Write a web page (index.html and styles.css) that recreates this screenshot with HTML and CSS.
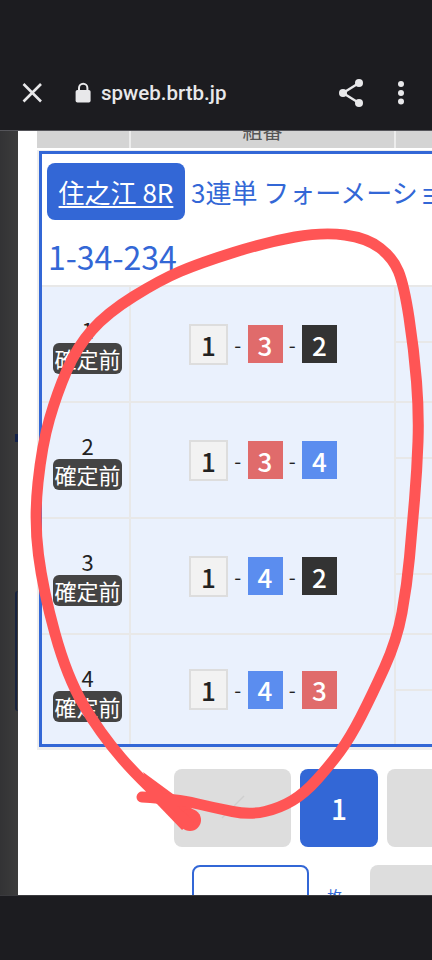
FILE: index.html
```html
<!DOCTYPE html>
<html lang="ja">
<head>
<meta charset="utf-8">
<title>spweb.brtb.jp</title>
<link rel="stylesheet" href="styles.css">
</head>
<body>
<div class="screen">
  <header class="topbar">
    <svg class="ico-close" width="24" height="24" viewBox="0 0 24 24"><path d="M3.5 3 L21 20.5 M21 3 L3.5 20.5" fill="none" stroke="#e8e8ea" stroke-width="2.6"/></svg>
    <svg class="ico-lock" width="20" height="24" viewBox="0 0 20 24"><path d="M6 10 V7 a4.2 4.2 0 0 1 8.4 0 V10" fill="none" stroke="#e8e8ea" stroke-width="2"/><rect x="2.6" y="9" width="15" height="12.5" rx="1.8" fill="#e8e8ea"/></svg>
    <span class="url">spweb.brtb.jp</span>
    <svg class="ico-share" width="28" height="30" viewBox="0 0 28 30"><path d="M22 5 L6 15 L22 25" fill="none" stroke="#e8e8ea" stroke-width="2.4"/><circle cx="22" cy="5" r="4" fill="#e8e8ea"/><circle cx="6" cy="15" r="4" fill="#e8e8ea"/><circle cx="22" cy="25" r="4" fill="#e8e8ea"/></svg>
    <svg class="ico-more" width="8" height="26" viewBox="0 0 8 26"><circle cx="4" cy="4" r="3" fill="#e8e8ea"/><circle cx="4" cy="13" r="3" fill="#e8e8ea"/><circle cx="4" cy="21.500" r="3" fill="#e8e8ea"/></svg>
  </header>

  <main class="content">
    <aside class="side">
      <div class="side-mark"></div>
      <div class="side-frame"></div>
    </aside>
    <section class="sheet">
      <div class="thead">
        <div class="th"></div>
        <div class="th th-label">組番</div>
        <div class="th"></div>
      </div>
      <div class="frame-wrap">
        <div class="frame">
          <div class="title">
            <div class="title-line">
              <a class="venue">住之江 8R</a>
              <span class="bet-type">3連単 フォーメーション</span>
            </div>
            <div class="combo">1-34-234</div>
          </div>

          <div class="row">
            <div class="cell-no"><span class="no">1</span><span class="status">確定前</span></div>
            <div class="cell-boxes">
              <span class="box box-1">1</span><span class="dash">-</span><span class="box box-3">3</span><span class="dash">-</span><span class="box box-2">2</span>
            </div>
            <div class="cell-rest"><div class="half"></div></div>
          </div>
          <div class="row">
            <div class="cell-no"><span class="no">2</span><span class="status">確定前</span></div>
            <div class="cell-boxes">
              <span class="box box-1">1</span><span class="dash">-</span><span class="box box-3">3</span><span class="dash">-</span><span class="box box-4">4</span>
            </div>
            <div class="cell-rest"><div class="half"></div></div>
          </div>
          <div class="row">
            <div class="cell-no"><span class="no">3</span><span class="status">確定前</span></div>
            <div class="cell-boxes">
              <span class="box box-1">1</span><span class="dash">-</span><span class="box box-4">4</span><span class="dash">-</span><span class="box box-2">2</span>
            </div>
            <div class="cell-rest"><div class="half"></div></div>
          </div>
          <div class="row row-last">
            <div class="cell-no"><span class="no">4</span><span class="status">確定前</span></div>
            <div class="cell-boxes">
              <span class="box box-1">1</span><span class="dash">-</span><span class="box box-4">4</span><span class="dash">-</span><span class="box box-3">3</span>
            </div>
            <div class="cell-rest"><div class="half"></div></div>
          </div>
        </div>
      </div>

      <div class="pager">
        <div class="pg pg-wide">
          <svg width="30" height="30" viewBox="0 0 30 30"><path d="M26 3 L4 25" stroke="#cfcfcf" stroke-width="1.5" fill="none"/></svg>
        </div>
        <div class="pg pg-on">1</div>
        <div class="pg pg-off"></div>
      </div>

      <div class="actions">
        <div class="act-outline"></div>
        <span class="act-unit">枚</span>
        <div class="act-gray">確定</div>
      </div>
    </section>
  </main>

  <footer class="bottombar"></footer>

  <svg class="scribble" width="432" height="960" viewBox="0 0 432 960">
    <polygon class="scribble-fill" points="143,772 177,797 200,815 182,830 156,803"/>
    <circle class="scribble-fill" cx="190" cy="820" r="11"/>
    <path class="scribble-line" d="M142 797 Q177 799 196 803.500 Q215 808 232.500 811.500 Q250 815 265 811.500 Q280 808 292.500 800.500 Q305 793 317.500 779 Q330 765 340 751.500 Q350 738 361 716.500 Q372 695 384.500 667.500 Q397 640 402 612.500 Q407 585 409.500 557.500 Q412 530 414.500 500 Q417 470 418 441.500 Q419 413 416.500 381.500 Q414 350 409 317.500 Q404 285 398.500 271.500 Q393 258 380 248 Q367 238 345 235 Q323 232 295 237 Q267 242 233.500 252.500 Q200 263 180 271.500 Q160 280 133.500 296.500 Q107 313 92 330 Q77 347 67 370 Q57 393 49.500 419 Q42 445 38 482.500 Q34 520 38.500 555 Q43 590 55 633.500 Q67 677 83.500 705 Q100 733 121.500 758 Q143 783 188 823"/>
  </svg>
</div>
</body>
</html>
```
FILE: styles.css
```css
* { box-sizing: border-box; }
html, body { margin: 0; padding: 0; }
body { background: #1c1c20; font-family: "Noto Sans CJK JP", "Noto Sans", sans-serif; }

.screen {
  position: relative;
  width: 432px;
  height: 960px;
  overflow: hidden;
  display: flex;
  flex-direction: column;
}

/* browser chrome */
.topbar {
  height: 131px;
  flex: none;
  background: #1c1c20;
  border-bottom: 1px solid #55555a;
  display: flex;
  align-items: center;
  padding: 56px 0 0 20px;
}
.ico-lock { margin-left: 29px; }
.url {
  margin-left: 8px;
  font-family: Roboto, sans-serif;
  font-weight: 500;
  font-size: 20.500px;
  color: #e8e8ea;
}
.ico-share { margin-left: auto; }
.ico-more { margin: 0 27px 0 32px; }

.bottombar {
  height: 65px;
  flex: none;
  background: #1c1c20;
  border-top: 1px solid #3a3a3e;
}

/* page */
.content {
  flex: 1;
  min-height: 0;
  display: flex;
  overflow: hidden;
}
.side {
  width: 18px;
  flex: none;
  background: linear-gradient(to right, #333335, #3c3c3c);
  display: flex;
  flex-direction: column;
  align-items: flex-end;
}
.side-mark { width: 3px; height: 8px; margin-top: 303px; background: #14224a; }
.side-frame {
  width: 3px;
  height: 120px;
  margin-top: 149px;
  border-left: 2px solid #17233f;
  border-radius: 6px 0 0 6px;
}
.sheet {
  flex: 1;
  min-width: 0;
  background: #fff;
  padding-left: 19px;
  overflow: hidden;
}

.thead {
  width: 420px;
  height: 17px;
  display: grid;
  grid-template-columns: 94px 265px 1fr;
  background: #fff;
}
.th { background: #d4d4d4; border-right: 2px solid #ececec; }
.th-label {
  display: flex;
  align-items: flex-end;
  justify-content: center;
  font-size: 20px;
  line-height: 20px;
  color: #555;
  padding-bottom: 7px;
  overflow: hidden;
}

.frame-wrap {
  width: 420px;
  margin-top: 2px;
  padding: 1px 0 3px 2px;
  background: #eee;
}
.frame {
  border: 3px solid #3367d6;
  border-right: 0;
  background: #fff;
}

.title { height: 131px; padding: 9px 0 0 5px; color: #3367d6; overflow: hidden; }
.title-line { display: flex; align-items: center; gap: 6px; white-space: nowrap; }
.venue {
  flex: none;
  width: 138px;
  height: 57px;
  display: flex;
  align-items: center;
  justify-content: center;
  background: #3367d6;
  border-radius: 8px;
  color: #fff;
  font-size: 26px;
  font-weight: 400;
  text-decoration: underline;
  text-underline-offset: 3px;
}
.bet-type { font-size: 26px; }
.combo { margin-top: 14px; font-size: 32px; line-height: 44px; margin-left: 1px; }

.row {
  height: 116px;
  display: grid;
  grid-template-columns: 89px 265px 1fr;
  border-top: 2px solid #e8e8e8;
  background: #eaf1fd;
}
.row-last { height: 111px; }
.cell-no {
  display: flex;
  flex-direction: column;
  align-items: center;
  padding: 29px 0 0 4px;
  border-right: 2px solid #e8e8e8;
}
.no { font-size: 22px; line-height: 26px; height: 27px; color: #222; }
.status {
  width: 69px;
  height: 31px;
  background: #444;
  border-radius: 6px;
  color: #fff;
  font-size: 22px;
  line-height: 30px;
  text-align: center;
  white-space: nowrap;
}
.cell-boxes {
  display: flex;
  align-items: center;
  justify-content: center;
  border-right: 2px solid #e8e8e8;
  padding-left: 1px;
}
.box {
  width: 35px;
  height: 38px;
  display: flex;
  align-items: center;
  justify-content: center;
  font-size: 26px;
  font-weight: 500;
  color: #fff;
}
.box-1 { width: 39px; height: 41px; background: #f2f2f2; border: 2px solid #ddd; color: #222; }
.box-2 { background: #333; }
.box-3 { background: #e06b6b; }
.box-4 { background: #5b8def; }
.dash { width: 19.500px; text-align: center; font-size: 20px; color: #222; }
.half { height: 56px; border-bottom: 2px solid #e8e8e8; }

/* pager */
.pager {
  display: flex;
  gap: 9px;
  margin-top: 19px;
  padding-left: 137px;
  width: 460px;
}
.pg {
  flex: none;
  width: 78px;
  height: 78px;
  border-radius: 8px;
  display: flex;
  align-items: center;
  justify-content: center;
  background: #ddd;
}
.pg-wide { width: 117px; }
.pg-on { background: #3367d6; color: #fff; font-size: 28px; font-weight: 500; }

.actions {
  display: flex;
  margin-top: 18px;
  padding-left: 155px;
  width: 520px;
  height: 60px;
}
.act-outline {
  flex: none;
  width: 117px;
  height: 60px;
  border: 2px solid #3367d6;
  border-radius: 8px;
}
.act-unit { flex: none; margin: 19px 0 0 18px; font-size: 15px; line-height: 24px; color: #3367d6; }
.act-gray {
  flex: none;
  width: 120px;
  height: 60px;
  margin-left: 28px;
  padding: 24px 0 0 34px;
  background: #ddd;
  border-radius: 8px;
  color: #999;
  font-size: 22px;
  line-height: 30px;
}

/* hand-drawn annotation laid over the page */
.scribble { position: absolute; left: 0; top: 0; pointer-events: none; }
.scribble-line { fill: none; stroke: #ff5555; stroke-width: 11; stroke-linecap: round; stroke-linejoin: round; }
.scribble-fill { fill: #ff5555; }
```
